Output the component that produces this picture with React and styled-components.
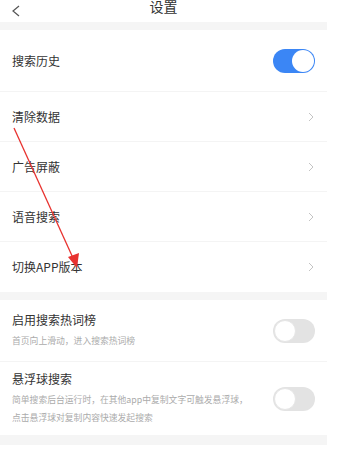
import styled, { createGlobalStyle } from "styled-components";

const Global = createGlobalStyle`
    body {
        margin: 0;
        background: #fff;
        font-family: "Noto Sans CJK SC", "Noto Sans", sans-serif;
    }
`;

const Page = styled.div`
    position: relative;
    width: 327px;
    height: 451px;
    overflow: hidden;
    background: #fff;
`;

const Header = styled.div`
    height: 22px;
    display: flex;
    align-items: flex-start;
    justify-content: center;
    position: relative;
`;

const Back = styled.div`
    position: absolute;
    left: 11px;
    top: -2px;
`;

const Title = styled.div`
    font-size: 14px;
    line-height: 14px;
    color: #333;
    margin-top: -1px;
`;

const Band = styled.div`
    height: ${props => props.h || 8}px;
    background: #f5f5f5;
`;

const Row = styled.div`
    height: ${props => props.h}px;
    display: flex;
    align-items: center;
    justify-content: space-between;
    padding: 0 12px;
    border-bottom: ${props => props.last ? "none" : "1px solid #f4f4f4"};
    box-sizing: border-box;
`;

const Texts = styled.div`
    display: flex;
    flex-direction: column;
`;

const Label = styled.div`
    font-size: 12px;
    line-height: 16px;
    color: #333;
`;

const Sub = styled.div`
    font-size: 8.8px;
    line-height: 18px;
    color: #ababab;
    margin-top: ${props => props.first ? "4px" : "0"};
`;

const Track = styled.div`
    width: 42px;
    height: 24px;
    border-radius: 12px;
    background: ${props => props.on ? "#3b86f5" : "#e3e3e3"};
    position: relative;
    flex-shrink: 0;
`;

const Knob = styled.div`
    position: absolute;
    top: 1px;
    ${props => props.on ? "right: 1px;" : "left: 1px;"}
    width: 22px;
    height: 22px;
    border-radius: 50%;
    background: #fff;
    box-sizing: border-box;
    border: ${props => props.on ? "none" : "1px solid #e6e6e6"};
`;

const Chevron = () => (
    <svg width="8" height="10" viewBox="0 0 8 10">
        <path d="M2 1 L6 5 L2 9" fill="none" stroke="#c4c4c4" strokeWidth="1" />
    </svg>
);

const Arrow = styled.svg`
    position: absolute;
    left: 0;
    top: 0;
    pointer-events: none;
`;

const Toggle = ({ on }) => (
    <Track on={on}>
        <Knob on={on} />
    </Track>
);

const links = ["清除数据", "广告屏蔽", "语音搜索", "切换APP版本"];

export default function App() {
    return (
        <Page>
            <Global />
            <Header>
                <Back>
                    <svg width="10" height="12" viewBox="0 0 10 12">
                        <path d="M8 1 L2 6 L8 11" fill="none" stroke="#555" strokeWidth="1.2" />
                    </svg>
                </Back>
                <Title>设置</Title>
            </Header>
            <Band />
            <Row h={62}>
                <Label>搜索历史</Label>
                <Toggle on />
            </Row>
            {links.map((t, i) => (
                <Row h={50} key={t} last={i === 3}>
                    <Label>{t}</Label>
                    <Chevron />
                </Row>
            ))}
            <Band />
            <Row h={62}>
                <Texts>
                    <Label>启用搜索热词榜</Label>
                    <Sub first>首页向上滑动，进入搜索热词榜</Sub>
                </Texts>
                <Toggle />
            </Row>
            <Row h={73} last>
                <Texts>
                    <Label>悬浮球搜索</Label>
                    <Sub first>简单搜索后台运行时，在其他app中复制文字可触发悬浮球，</Sub>
                    <Sub>点击悬浮球对复制内容快速发起搜索</Sub>
                </Texts>
                <Toggle />
            </Row>
            <Band h={10} />
            <Arrow width="327" height="451">
                <line x1="14" y1="128" x2="73" y2="258" stroke="#e8322f" strokeWidth="1.3" />
                <polygon points="77,268 68,257 79,253" fill="#e8322f" />
            </Arrow>
        </Page>
    );
}
